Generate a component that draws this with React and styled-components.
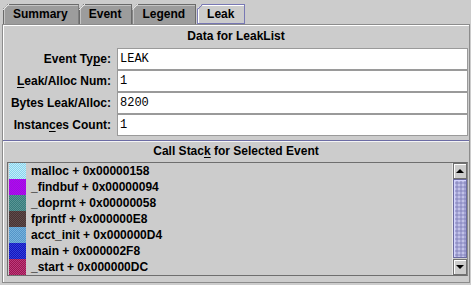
import React from "react";
import styled, { createGlobalStyle, css } from "styled-components";

const Global = createGlobalStyle`
  html, body { margin: 0; padding: 0; background: #cccccc; }
  * { box-sizing: border-box; }
`;

const Page = styled.div`
  width: 471px;
  height: 285px;
  background: #cccccc;
  padding: 0 1px 2px 2px;
  display: flex;
  flex-direction: column;
  font-family: "Liberation Sans", Arial, sans-serif;
  font-weight: bold;
  font-size: 12px;
  color: #000;
  overflow: hidden;
`;

const TabStrip = styled.div`
  height: 24px;
  padding: 4px 0 0 1px;
  display: flex;
  align-items: stretch;
`;

const Tab = styled.div`
  position: relative;
  height: 20px;
  line-height: 19px;
  padding: 0 10px 0 9px;
  margin-right: ${(p) => (p.$gap ? "1px" : "0")};
  background: ${(p) => (p.$active ? "#cccccc" : "#9c9c9c")};
  border: 1px solid ${(p) => (p.$active ? "#7878b4" : "#6a6a6a")};
  border-bottom: ${(p) => (p.$active ? "1px solid #7878b4" : "none")};
  box-shadow: inset 1px 1px 0 ${(p) => (p.$active ? "#ffffff" : "#c4c4c4")};
  clip-path: polygon(5px 0, 100% 0, 100% 100%, 0 100%, 0 5px);
  white-space: nowrap;
  &::before {
    content: "";
    position: absolute;
    left: -1px;
    top: -1px;
    width: 6px;
    height: 6px;
    background: linear-gradient(
      to bottom right,
      transparent calc(50% - 0.8px),
      ${(p) => (p.$active ? "#7878b4" : "#e8e8e8")} 50%,
      transparent calc(50% + 0.8px)
    );
  }
`;

const Panel = styled.div`
  flex: 1;
  border: 1px solid #8c8c8c;
  box-shadow: inset 1px 1px 0 #ffffff;
  display: flex;
  flex-direction: column;
  padding-top: 3px;
`;

const Title = styled.div`
  height: 16px;
  line-height: 16px;
  text-align: center;
  margin-top: ${(p) => p.$mt || 0}px;
`;

const Mn = styled.span`
  text-decoration: underline;
  text-underline-offset: 2px;
  text-decoration-thickness: 1px;
`;

const Form = styled.div`
  margin: 4px 1px 0 0;
  display: grid;
  grid-template-columns: 108px 1fr;
  column-gap: 6px;
`;

const Label = styled.div`
  height: 22px;
  line-height: 22px;
  text-align: right;
  white-space: nowrap;
`;

const Field = styled.div`
  height: 22px;
  background: #ffffff;
  border: 1px solid #9a9a9a;
  font-family: "Liberation Mono", "Courier New", monospace;
  font-weight: normal;
  font-size: 12px;
  line-height: 20px;
  padding-left: 2px;
`;

const Separator = styled.div`
  margin-top: 4px;
  height: 2px;
  border-top: 1px solid #6c6ca4;
  border-bottom: 1px solid #f4f4f4;
`;

const ListBox = styled.div`
  margin: 3px 1px 0 4px;
  height: 114px;
  border: 1px solid #6e6e6e;
  border-right-color: #8a8a8a;
  display: flex;
`;

const Rows = styled.div`
  flex: 1;
  padding-left: 1px;
  display: flex;
  flex-direction: column;
`;

const Row = styled.div`
  height: 16px;
  line-height: 16px;
  display: flex;
  align-items: center;
  gap: 5px;
  white-space: nowrap;
`;

const Swatch = styled.span`
  width: 17px;
  height: 16px;
  flex: none;
  background: repeating-conic-gradient(${(p) => p.$a} 0 25%, ${(p) => p.$b} 0 50%) 0 0 / 2px 2px;
`;

const ScrollBar = styled.div`
  width: 15px;
  display: flex;
  flex-direction: column;
  background: #cccccc;
  border-left: 1px solid #e6e6e6;
`;

const ArrowBtn = styled.div`
  height: 16px;
  flex: none;
  background: #cccccc;
  border: 1px solid #707070;
  box-shadow: inset 1px 1px 0 #ffffff;
  display: flex;
  align-items: center;
  justify-content: center;
  ${(p) => (p.$down ? css`margin-top: 1px;` : "")}
  &::after {
    content: "";
    width: 0;
    height: 0;
    border-left: 4px solid transparent;
    border-right: 4px solid transparent;
    ${(p) =>
      p.$down
        ? css`border-top: 4px solid #000;`
        : css`border-bottom: 4px solid #000;`}
  }
`;

const Thumb = styled.div`
  flex: 1;
  border: 1px solid #6a6aa0;
  background-color: #a4a4d4;
  background-image: radial-gradient(circle at 1px 1px, #e4e4ff 0.6px, transparent 0.8px),
    radial-gradient(circle at 3px 3px, #7e7eb6 0.6px, transparent 0.8px);
  background-size: 4px 4px;
  box-shadow: inset 1px 1px 0 #d4d4ff;
`;

const stack = [
  { name: "malloc + 0x00000158", a: "#86d4ee", b: "#c4ecf8" },
  { name: "_findbuf + 0x00000094", a: "#b400f4", b: "#9a18dc" },
  { name: "_doprnt + 0x00000058", a: "#367c7c", b: "#5a9494" },
  { name: "fprintf + 0x000000E8", a: "#483232", b: "#5e4c4c" },
  { name: "acct_init + 0x000000D4", a: "#5494c8", b: "#76b2dc" },
  { name: "main + 0x000002F8", a: "#1414bc", b: "#3040dc" },
  { name: "_start + 0x000000DC", a: "#9c1450", b: "#bc3c7c" },
];

export default function App() {
  return (
    <>
      <Global />
      <Page>
        <TabStrip>
          <Tab>Summary</Tab>
          <Tab>Event</Tab>
          <Tab $gap>Legend</Tab>
          <Tab $active>Leak</Tab>
        </TabStrip>
        <Panel>
          <Title>Data for LeakList</Title>
          <Form>
            <Label>
              Event Ty<Mn>p</Mn>e:
            </Label>
            <Field>LEAK</Field>
            <Label>
              <Mn>L</Mn>eak/Alloc Num:
            </Label>
            <Field>1</Field>
            <Label>Bytes Leak/Alloc:</Label>
            <Field>8200</Field>
            <Label>
              Instan<Mn>c</Mn>es Count:
            </Label>
            <Field>1</Field>
          </Form>
          <Separator />
          <Title $mt={1}>
            Call Stac<Mn>k</Mn> for Selected Event
          </Title>
          <ListBox>
            <Rows>
              {stack.map((s) => (
                <Row key={s.name}>
                  <Swatch $a={s.a} $b={s.b} />
                  {s.name}
                </Row>
              ))}
            </Rows>
            <ScrollBar>
              <ArrowBtn />
              <Thumb />
              <ArrowBtn $down />
            </ScrollBar>
          </ListBox>
        </Panel>
      </Page>
    </>
  );
}
